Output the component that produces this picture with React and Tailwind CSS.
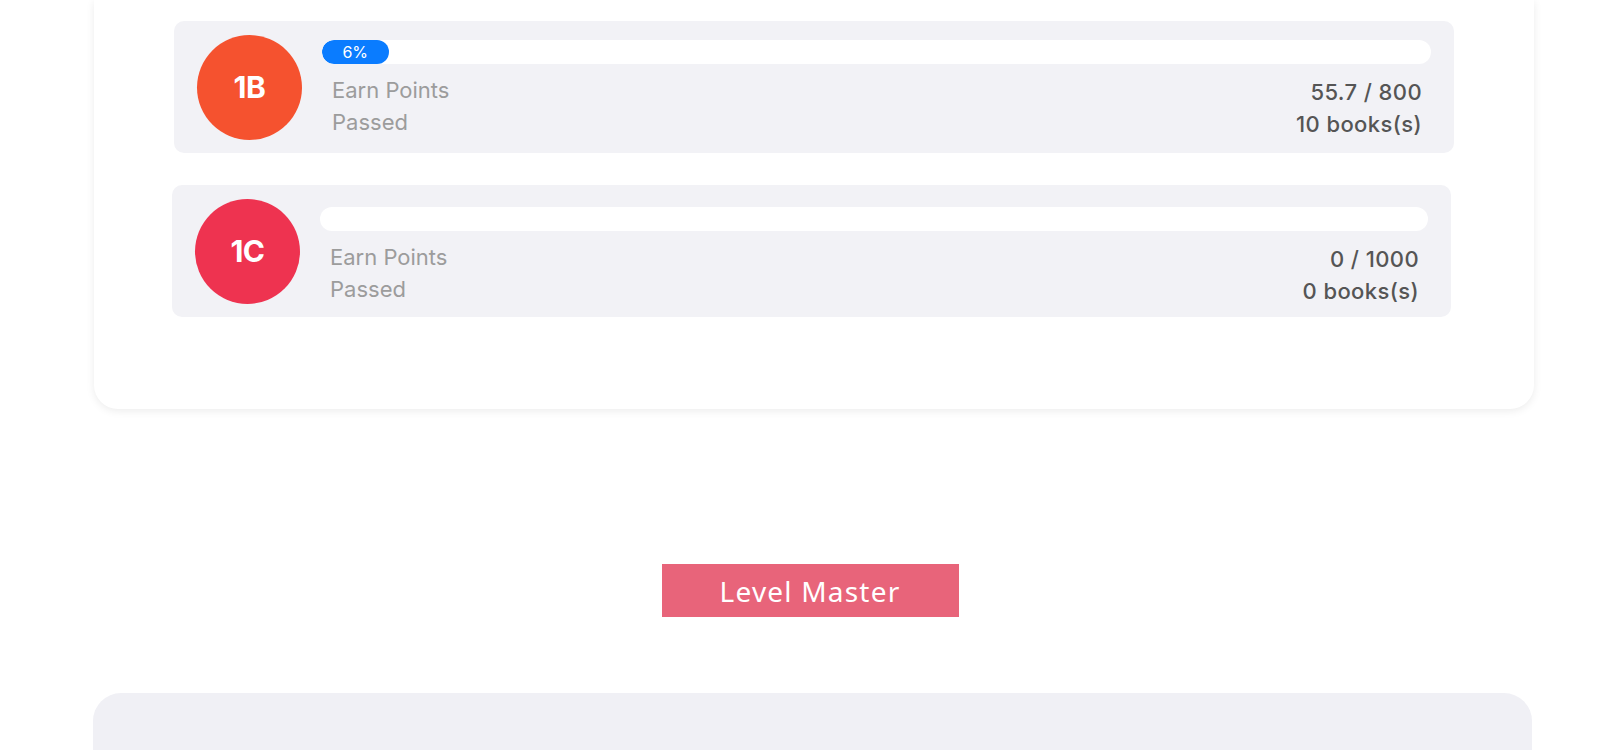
const levels = [
  { code: '1B', color: 'bg-[#f5522f]', pct: 6, points: '55.7 / 800', books: '10 books(s)', shift: 'ml-[2px] w-[1280px]', top: 'pt-[19px]' },
  { code: '1C', color: 'bg-[#ee3350]', pct: 0, points: '0 / 1000', books: '0 books(s)', shift: 'ml-0 w-[1279px]', top: 'pt-[22px]' },
];

function LevelRow({ level }) {
  return (
    <div className={`flex items-center h-[132px] rounded-[10px] bg-[#f2f2f6] pl-[23px] pr-[23px] ${level.shift}`}>
      <div
        className={`flex items-center justify-center w-[105px] h-[105px] shrink-0 rounded-full ${level.color} text-white text-[30px] font-bold tracking-[-0.5px]`}
      >
        {level.code}
      </div>
      <div className={`flex-1 ml-[20px] self-start ${level.top}`}>
        <div className="h-[24px] rounded-full bg-white overflow-hidden">
          {level.pct > 0 && (
            <div
              className="h-full rounded-full bg-[#0a7cff] flex items-center justify-center text-white text-[16px] leading-none"
              style={{ width: `${level.pct}%` }}
            >
              {level.pct}%
            </div>
          )}
        </div>
        <div className="flex justify-between pl-[10px] pr-[9px] mt-[10px] leading-[32px]">
          <div className="text-[#9c9c9c] text-[22px]">
            <div>Earn Points</div>
            <div>Passed</div>
          </div>
          <div className="text-right text-[#555] text-[22px] font-medium tracking-[0.4px] pt-[2px]">
            <div>{level.points}</div>
            <div>{level.books}</div>
          </div>
        </div>
      </div>
    </div>
  );
}

export default function App() {
  return (
    <div className="min-h-[750px] bg-white font-['Inter',sans-serif] overflow-hidden">
      <div className="ml-[94px] w-[1440px] rounded-b-[24px] bg-white shadow-[0_2px_8px_rgba(0,0,0,0.08)] pl-[78px] pt-[21px] pb-[92px] flex flex-col gap-[32px]">
        {levels.map((l) => (
          <LevelRow key={l.code} level={l} />
        ))}
      </div>

      <div className="flex justify-center mt-[155px]">
        <div className="w-[297px] h-[53px] bg-[#e8647a] flex items-center justify-center text-white text-[28px] tracking-[1.2px] font-['Noto_Sans',sans-serif]">
          Level Master
        </div>
      </div>

      <div className="ml-[93px] w-[1439px] h-[120px] mt-[76px] rounded-t-[28px] bg-[#f0f0f5]" />
    </div>
  );
}
